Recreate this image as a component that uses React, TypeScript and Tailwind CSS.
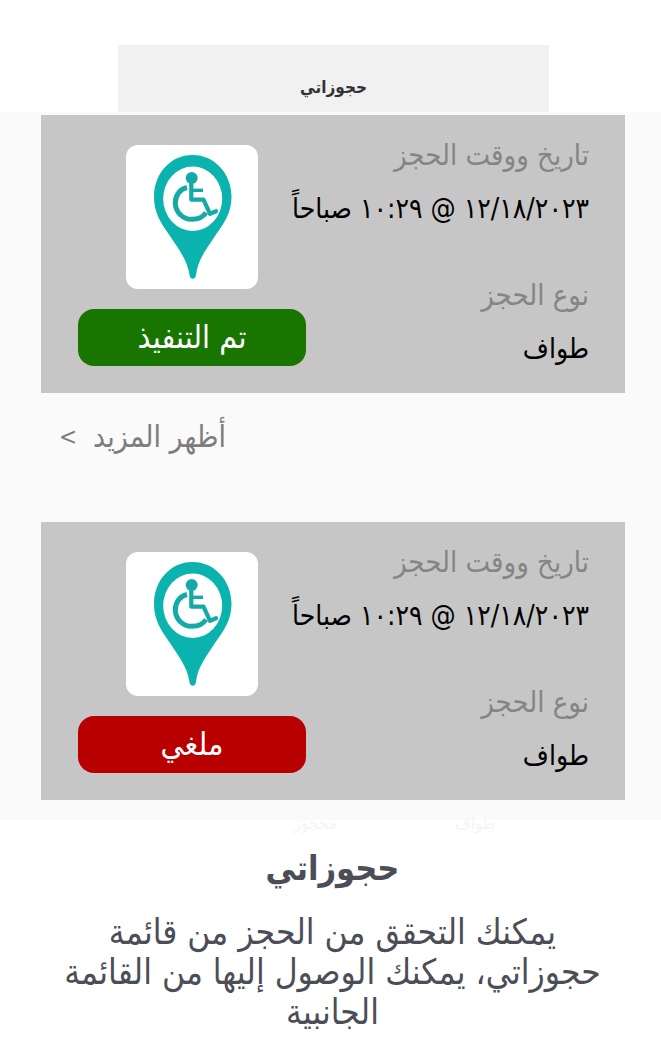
type Booking = {
  id: number;
  date: string;
  kind: string;
  status: string;
  statusClass: string;
};

const bookings: Booking[] = [
  {
    id: 1,
    date: "١٢/١٨/٢٠٢٣ @ ١٠:٢٩ صباحاً",
    kind: "طواف",
    status: "تم التنفيذ",
    statusClass: "bg-[#187500]",
  },
  {
    id: 2,
    date: "١٢/١٨/٢٠٢٣ @ ١٠:٢٩ صباحاً",
    kind: "طواف",
    status: "ملغي",
    statusClass: "bg-[#b90000]",
  },
];

function AccessiblePin() {
  return (
    <svg viewBox="0 0 132 144" className="h-36 w-33" role="img" aria-label="عربة">
      <path
        d="M66.500 10C44 10 28 29 28 52C28 68 35 78 44 91C54 106 61.500 116 63.500 130C64 135 69.500 135 70 130C71.500 116 79 106 89 91C98 78 105.500 68 105.500 52C105.500 29 89 10 66.500 10Z"
        fill="#0bb3ae"
      />
      <ellipse cx="66.700" cy="53.800" rx="29.500" ry="32.200" fill="#fff" />
      <g fill="none" stroke="#16aaa7">
        <circle cx="65.700" cy="33" r="6" fill="#16aaa7" stroke="none" />
        <path d="M65.300 38V54.700H77.500L84 68.800L90 66.300" strokeWidth="4.200" strokeLinejoin="round" strokeLinecap="round" />
        <path d="M66 45.300H77" strokeWidth="3.400" />
        <path d="M61 42.500C54 44 49.200 50.500 49.300 58C49.500 67.500 57 74.300 66 74.300C72.500 74.300 77.500 71.500 80 67.500" strokeWidth="5" />
      </g>
    </svg>
  );
}

function BookingCard({ booking }: { booking: Booking }) {
  return (
    <article className="flex bg-[#c6c6c6] ps-9 pe-[37px] pt-5 pb-6">
      <dl className="min-w-0 flex-1 whitespace-nowrap text-[28px]">
        <dt className="text-[29px] leading-10 text-[#858585]">تاريخ ووقت الحجز</dt>
        <dd className="mt-[14px] leading-10 text-black">{booking.date}</dd>
        <dt className="mt-[46px] text-[29px] leading-10 text-[#858585]">نوع الحجز</dt>
        <dd className="mt-[14px] leading-10 text-black">{booking.kind}</dd>
      </dl>
      <div className="flex w-[228px] shrink-0 flex-col items-center gap-5 pt-[10px]">
        <div className="rounded-xl bg-white">
          <AccessiblePin />
        </div>
        <p className={`w-full rounded-2xl text-center text-[32px] leading-[57px] text-white ${booking.statusClass}`}>
          {booking.status}
        </p>
      </div>
    </article>
  );
}

export default function App() {
  return (
    <main dir="rtl" lang="ar" className="bg-white font-['DejaVu_Sans_Condensed','DejaVu_Sans',sans-serif]">
      <header className="pt-[45px] ps-28 pe-[118px]">
        <h2 className="bg-[#f1f1f1] pt-[22px] pb-[5px] text-center text-[17px] leading-10 font-bold text-[#333]">
          حجوزاتي
        </h2>
      </header>
      <section className="bg-[#fafafa] ps-9 pe-[41px] pt-[3px] pb-5">
        <BookingCard booking={bookings[0]} />
        <a
          href="#more"
          className="mt-6 mb-[65px] me-[18px] ms-auto flex w-fit items-center gap-4 text-3xl leading-10 text-[#7d7d7d]"
        >
          <span>أظهر المزيد</span>
          <span className="text-2xl leading-10">&gt;</span>
        </a>
        <BookingCard booking={bookings[1]} />
      </section>
      <section className="ps-11 pe-12 pb-4 text-center text-[#4b4d57]">
        <div className="flex h-2 items-center gap-[118px] ps-[122px] text-[17px] text-[#f5f5f5]" aria-hidden="true">
          <span>طواف</span>
          <span>محجوز</span>
        </div>
        <h1 className="mt-1 text-[34px] leading-[72px] font-bold">حجوزاتي</h1>
        <p className="mt-2 text-[35px] leading-10">
          يمكنك التحقق من الحجز من قائمة حجوزاتي، يمكنك الوصول إليها من القائمة الجانبية
        </p>
      </section>
    </main>
  );
}
